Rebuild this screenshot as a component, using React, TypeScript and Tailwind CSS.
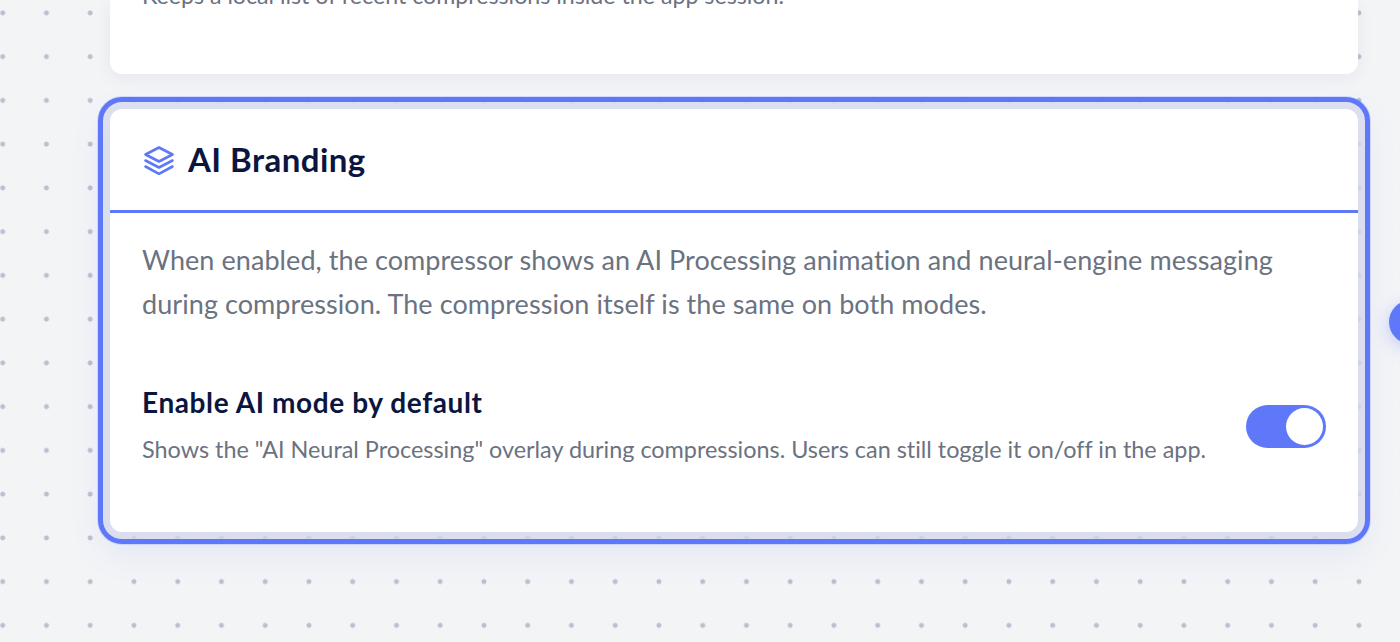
import React from "react";

function StackIcon() {
  return (
    <svg
      viewBox="0 0 30 30"
      fill="none"
      stroke="currentColor"
      strokeWidth={2.6}
      strokeLinecap="round"
      strokeLinejoin="round"
      className="mt-[2px] w-[30px] h-[30px] shrink-0 text-[#5f78fa]"
    >
      <path d="M15 1.5 28.5 8.5 15 15.5 1.5 8.5Z" />
      <path d="M1.5 14.5 15 21.5 28.5 14.5" />
      <path d="M1.5 20.5 15 27.8 28.5 20.5" />
    </svg>
  );
}

export default function App() {
  return (
    <div className="relative h-[642px] overflow-hidden bg-[#f3f4f6] bg-[radial-gradient(circle,#b9c0d0_2.2px,transparent_2.8px)] bg-[size:43.75px_43.75px] bg-[position:-19.2px_-9px] font-['Lato',sans-serif] [font-variant-ligatures:none]">
      <div className="flex flex-col gap-[35px] pl-[110px] pr-[42px]">
        {/* Previous card, scrolled off the top */}
        <div className="h-[74px] rounded-b-[12px] bg-white shadow-[0_4px_18px_rgba(30,40,80,0.06)] px-[32px] overflow-hidden flex flex-col">
          <p className="-mt-[20px] text-[23.2px] leading-[30px] text-[#6b7280]">
            Keeps a local list of recent compressions inside the app session.
          </p>
        </div>

        {/* AI Branding card */}
        <div className="rounded-[12px] bg-white outline-[5px] outline-offset-[7px] outline-[#5f78fa] shadow-[0_0_0_7px_rgba(225,227,235,0.7),0_0_0_13px_rgba(95,120,250,0.2),0_14px_32px_8px_rgba(95,120,250,0.1)]">
          <div className="h-[104px] flex items-center gap-[14px] pl-[34px] border-b-[3px] border-[#5f78fa]">
            <StackIcon />
            <h2 className="text-[33px] tracking-[0.45px] font-bold text-[#0b1640]">AI Branding</h2>
          </div>
          <div className="px-[32px] pt-[25px] pb-[67px]">
            <p className="text-[27px] tracking-[0.07px] leading-[43.5px] text-[#6b7280]">
              When enabled, the compressor shows an AI Processing animation and neural-engine messaging during compression. The compression itself is the same on both modes.
            </p>
            <div className="mt-[58px] flex items-center justify-between">
              <div>
                <h3 className="text-[28px] tracking-[0.6px] leading-[38px] font-bold text-[#0b1640]">Enable AI mode by default</h3>
                <p className="mt-[12px] text-[23.4px] leading-[32px] text-[#6b7280]">
                  Shows the "AI Neural Processing" overlay during compressions. Users can still toggle it on/off in the app.
                </p>
              </div>
              <div className="mt-[4px] w-[80px] h-[43px] rounded-full bg-[#5f78fa] flex items-center justify-end pr-[3.5px]">
                <div className="w-[37px] h-[37px] rounded-full bg-white" />
              </div>
            </div>
          </div>
        </div>
      </div>

      {/* Floating button peeking in from the right */}
      <div className="absolute left-[1389px] top-[300px] w-[44px] h-[44px] rounded-full bg-[#5f78fa] shadow-[0_4px_16px_rgba(95,120,250,0.35)]" />
    </div>
  );
}
